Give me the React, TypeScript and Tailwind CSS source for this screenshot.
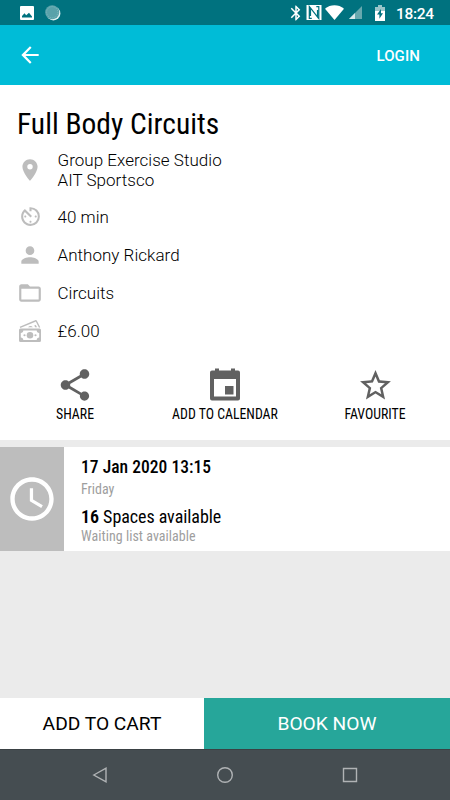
import type { ReactNode } from "react";
import {
  MdAccessTime, MdArrowBack, MdAvTimer, MdBluetooth, MdFolderOpen,
  MdPerson, MdPlace, MdShare, MdStarBorder,
} from "react-icons/md";

const condensed = "font-['Roboto_Condensed','Roboto',sans-serif] [font-stretch:75%]";

function StatusBar() {
  return (
    <header className="flex h-[25px] items-center bg-[#00727f] text-white">
      <svg className="ml-[20px] mt-[1px] h-[14px] w-[14px]" viewBox="0 0 14 14">
        <rect width="14" height="14" rx="1" fill="#fff" />
        <path fill="#00727f" d="M2 11.500V10l2.500-2.700 1.700 1.900L9 6.800l3 3.700v1z" />
      </svg>
      <svg className="ml-[11px] size-4" viewBox="0 0 16 16">
        <circle cx="8.4" cy="8.4" r="7" fill="#dff0f1" />
        <circle cx="7.2" cy="7.2" r="7" fill="#59a2aa" />
        <circle cx="7.2" cy="7.2" r="5.6" fill="none" stroke="#8dc0c5" strokeWidth=".7" strokeDasharray="1 1" />
      </svg>
      <MdBluetooth className="ml-[226px] mt-[1px] size-[18px]" />
      <svg className="ml-[1px] h-[15px] w-[16px]" viewBox="0 0 16 15">
        <path fill="#fff" d="M.5 0h15v15H.5z" />
        <path fill="none" stroke="#00727f" strokeWidth="1.200" d="M5.800 13.300H3.300V1.500L11.500 12V5M4.500 3v8M10.300 1.700h2.500v11.800L4.600 3" />
      </svg>
      <svg className="ml-[3px] h-[15px] w-[19px]" viewBox="0 0 19 15">
        <path fill="#fff" d="M0 3.7C5.4-.8 13.6-.8 19 3.7L9.5 15z" />
      </svg>
      <svg className="ml-[5px] size-[13px]" viewBox="0 0 13 13">
        <path fill="#67a8ae" d="M0 13 13 0v13z" />
        <path fill="#d7e9eb" d="M0 13 6 7v6z" />
      </svg>
      <svg className="ml-[13px] mt-[1px] h-4 w-[10px]" viewBox="0 0 10 16">
        <path fill="#9ac5c9" d="M3 0h4v2h3v5H0V2h3z" />
        <path fill="#fff" d="M0 6h10v10H0z" />
        <path fill="#00727f" d="m6 4-4 5.500h2.400v4.300L8 8.300H6z" />
      </svg>
      <span className="ml-[11px] mt-[3px] text-[15.500px] font-medium leading-[22px] tracking-[-0.3px]">18:24</span>
    </header>
  );
}

function MoneyIcon() {
  return (
    <svg className="-mt-px size-6" viewBox="0 0 24 24" fill="#bdbdbd">
      <path fill="none" stroke="#bdbdbd" strokeWidth="1.400" d="M2 8.300 17.200 2c.6-.3 1-.1 1.200.3l3.200 6.200" />
      <path d="M10 8.300c1.500-1.800 3.600-1.800 4.800 0zM16.200 6.600l1.600-.7 1.200 2.400h-1.800z" />
      <path fillRule="evenodd" d="M3 9.500h18.500a1.500 1.500 0 0 1 1.500 1.500v10.500a1.500 1.500 0 0 1-1.500 1.500h-19A1.500 1.500 0 0 1 1 21.500V11a1.500 1.500 0 0 1 1.500-1.500zm2.300 2c0 1.500-1 2.500-2.500 2.500v4.500c1.500 0 2.500 1 2.500 2.500h13.400c0-1.500 1-2.500 2.500-2.500V14c-1.500 0-2.500-1-2.500-2.500z" />
      <circle cx="12" cy="16.250" r="3.300" />
      <circle cx="6.500" cy="16.250" r="1.100" />
      <circle cx="17.500" cy="16.250" r="1.100" />
    </svg>
  );
}

function CalendarIcon() {
  return (
    <svg className="h-9 w-9" viewBox="0 0 36 36">
      <path fill="#616161" fillRule="evenodd" d="M8 1.500h4v2h12v-2h4v2h3a2 2 0 0 1 2 2v26a2 2 0 0 1-2 2H5a2 2 0 0 1-2-2v-26a2 2 0 0 1 2-2h3zM7 12v17.500h22V12z" />
      <path fill="#616161" d="M18 19h8.500v8.500H18z" />
    </svg>
  );
}

function Row({ icon, children }: { icon: ReactNode; children: ReactNode }) {
  return (
    <div className="flex h-[38px] items-center">
      <div className="flex w-[60px] justify-center text-[#bdbdbd]">{icon}</div>
      <div className="-ml-[2.500px] text-[17px] font-light leading-5 tracking-[0.03px]">{children}</div>
    </div>
  );
}

function Action({ icon, label }: { icon: ReactNode; label: string }) {
  return (
    <button className="flex w-[150px] flex-col items-center text-[#616161]">
      <span className="flex h-9 items-center">{icon}</span>
      <span className={`mt-px whitespace-nowrap text-[13.800px] leading-5 text-black ${condensed}`}>{label}</span>
    </button>
  );
}

export default function App() {
  return (
    <div className="flex h-[800px] w-[450px] flex-col overflow-hidden bg-[#ebebeb] font-['Roboto',sans-serif] text-black">
      <StatusBar />
      <nav className="flex h-[60px] items-center justify-between bg-[#00bcd7] pl-[17px] pr-[30px] text-white">
        <MdArrowBack className="size-[26px]" />
        <span className="mt-[2px] text-[15px] font-medium tracking-[0.1px]">LOGIN</span>
      </nav>

      <section className="h-[355px] bg-white pt-[20px]">
        <h1 className={`ml-[17px] h-9 w-max whitespace-nowrap text-[29.500px] leading-[38px] ${condensed}`}>Full Body Circuits</h1>
        <div className="mt-[10px]">
          <Row icon={<MdPlace className="size-[26px]" />}>Group Exercise Studio<br />AIT Sportsco</Row>
        </div>
        <div className="mt-[9px]">
          <Row icon={<MdAvTimer className="-mt-px size-[25px]" />}>40 min</Row>
          <Row icon={<MdPerson className="-mt-px size-[26px]" />}>Anthony Rickard</Row>
          <Row icon={<MdFolderOpen className="-mt-px size-[26px]" />}>Circuits</Row>
          <Row icon={<MoneyIcon />}>£6.00</Row>
        </div>
        <div className="mt-[17px] flex">
          <Action icon={<MdShare className="size-[38px]" />} label="SHARE" />
          <Action icon={<CalendarIcon />} label="ADD TO CALENDAR" />
          <Action icon={<MdStarBorder className="size-[37px]" />} label="FAVOURITE" />
        </div>
      </section>

      <section className="mt-[7px] flex h-[104px] bg-white">
        <div className="flex w-16 items-center justify-center bg-[#bdbdbd] text-white">
          <MdAccessTime className="size-[52px]" />
        </div>
        <div className={`pl-[17px] pt-[8px] ${condensed}`}>
          <div className="w-max text-[17.500px] font-medium leading-6 tracking-[0.04px]">17 Jan 2020 13:15</div>
          <div className="w-max text-[14px] leading-5 text-[#9e9e9e]">Friday</div>
          <div className="mt-[6px] w-max text-[18px] leading-6 tracking-[-0.05px]"><b className="font-semibold">16</b> Spaces available</div>
          <div className="w-max text-[14px] leading-[15px] tracking-[0.04px] text-[#9e9e9e]">Waiting list available</div>
        </div>
      </section>

      <div className="flex-1" />
      <div className="flex h-[51px] text-[19.200px]">
        <button className="w-[204px] bg-white pt-px">ADD TO CART</button>
        <button className="flex-1 bg-[#26a69a] pt-px text-white">BOOK NOW</button>
      </div>
      <footer className="flex h-[51px] items-center justify-center gap-[109px] border-t border-[#3a4144] bg-[#454d51]">
        <svg className="h-4 w-4" viewBox="0 0 16 16" fill="none" stroke="#b0b3b5" strokeWidth="1.400"><path d="M1.800 8 14 1.200v13.600z" /></svg>
        <svg className="h-4 w-4" viewBox="0 0 16 16" fill="none" stroke="#b0b3b5" strokeWidth="1.400"><circle cx="8" cy="8" r="7.300" /></svg>
        <svg className="h-4 w-4" viewBox="0 0 16 16" fill="none" stroke="#b0b3b5" strokeWidth="1.400"><path d="M1.500 1.500h13v13h-13z" /></svg>
      </footer>
    </div>
  );
}
